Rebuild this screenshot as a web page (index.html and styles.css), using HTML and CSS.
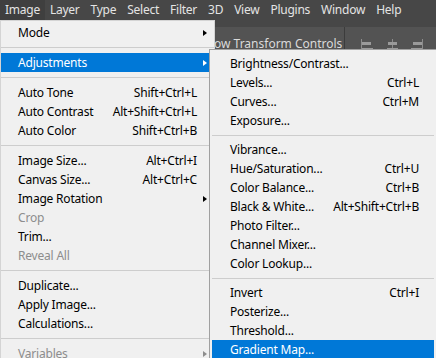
FILE: index.html
```html
<!DOCTYPE html>
<html lang="en">
<head>
    <meta charset="UTF-8">
    <meta name="viewport" content="width=device-width, initial-scale=1.0">
    <title>Image menu</title>
    <link rel="stylesheet" href="styles.css">
</head>
<body>
    <div class="menubar">
        <span class="menubar-item active">Image</span>
        <span class="menubar-item">Layer</span>
        <span class="menubar-item">Type</span>
        <span class="menubar-item">Select</span>
        <span class="menubar-item">Filter</span>
        <span class="menubar-item">3D</span>
        <span class="menubar-item">View</span>
        <span class="menubar-item">Plugins</span>
        <span class="menubar-item">Window</span>
        <span class="menubar-item">Help</span>
    </div>

    <div class="strip"></div>

    <div class="optionsbar">
        <span class="option-label">Show Transform Controls</span>
        <span class="option-divider"></span>
        <div class="align-icons">
            <svg width="14" height="16" viewBox="0 0 14 16">
                <rect x="1" y="0" width="1" height="16" fill="#8c8c8c"/>
                <rect x="2" y="3" width="9" height="3" fill="#9a9a9a"/>
                <rect x="2" y="9" width="11" height="3" fill="#9a9a9a"/>
            </svg>
            <svg width="14" height="16" viewBox="0 0 14 16">
                <rect x="7" y="0" width="1" height="16" fill="#8c8c8c"/>
                <rect x="3" y="3" width="9" height="3" fill="#9a9a9a"/>
                <rect x="2" y="9" width="11" height="3" fill="#9a9a9a"/>
            </svg>
            <svg width="14" height="16" viewBox="0 0 14 16">
                <rect x="12" y="0" width="1" height="16" fill="#8c8c8c"/>
                <rect x="3" y="3" width="9" height="3" fill="#9a9a9a"/>
                <rect x="1" y="9" width="11" height="3" fill="#9a9a9a"/>
            </svg>
        </div>
    </div>

    <!-- Image menu -->
    <div class="menu main-menu">
        <div class="item"><span class="label">Mode</span><span class="key"></span><span class="arrow-slot"><i class="arrow"></i></span></div>
        <div class="sep"></div>
        <div class="item selected"><span class="label">Adjustments</span><span class="key"></span><span class="arrow-slot"><i class="arrow"></i></span></div>
        <div class="sep"></div>
        <div class="item"><span class="label">Auto Tone</span><span class="key">Shift+Ctrl+L</span><span class="arrow-slot"></span></div>
        <div class="item"><span class="label">Auto Contrast</span><span class="key">Alt+Shift+Ctrl+L</span><span class="arrow-slot"></span></div>
        <div class="item"><span class="label">Auto Color</span><span class="key">Shift+Ctrl+B</span><span class="arrow-slot"></span></div>
        <div class="sep"></div>
        <div class="item"><span class="label">Image Size...</span><span class="key">Alt+Ctrl+I</span><span class="arrow-slot"></span></div>
        <div class="item"><span class="label">Canvas Size...</span><span class="key">Alt+Ctrl+C</span><span class="arrow-slot"></span></div>
        <div class="item"><span class="label">Image Rotation</span><span class="key"></span><span class="arrow-slot"><i class="arrow"></i></span></div>
        <div class="item disabled"><span class="label">Crop</span><span class="key"></span><span class="arrow-slot"></span></div>
        <div class="item"><span class="label">Trim...</span><span class="key"></span><span class="arrow-slot"></span></div>
        <div class="item disabled"><span class="label">Reveal All</span><span class="key"></span><span class="arrow-slot"></span></div>
        <div class="sep"></div>
        <div class="item"><span class="label">Duplicate...</span><span class="key"></span><span class="arrow-slot"></span></div>
        <div class="item"><span class="label">Apply Image...</span><span class="key"></span><span class="arrow-slot"></span></div>
        <div class="item"><span class="label">Calculations...</span><span class="key"></span><span class="arrow-slot"></span></div>
        <div class="sep"></div>
        <div class="item disabled"><span class="label">Variables</span><span class="key"></span><span class="arrow-slot"><i class="arrow"></i></span></div>
    </div>

    <!-- Adjustments submenu -->
    <div class="menu sub-menu">
        <div class="item"><span class="label">Brightness/Contrast...</span><span class="key"></span></div>
        <div class="item"><span class="label">Levels...</span><span class="key">Ctrl+L</span></div>
        <div class="item"><span class="label">Curves...</span><span class="key">Ctrl+M</span></div>
        <div class="item"><span class="label">Exposure...</span><span class="key"></span></div>
        <div class="sep"></div>
        <div class="item"><span class="label">Vibrance...</span><span class="key"></span></div>
        <div class="item"><span class="label">Hue/Saturation...</span><span class="key">Ctrl+U</span></div>
        <div class="item"><span class="label">Color Balance...</span><span class="key">Ctrl+B</span></div>
        <div class="item"><span class="label">Black &amp; White...</span><span class="key">Alt+Shift+Ctrl+B</span></div>
        <div class="item"><span class="label">Photo Filter...</span><span class="key"></span></div>
        <div class="item"><span class="label">Channel Mixer...</span><span class="key"></span></div>
        <div class="item"><span class="label">Color Lookup...</span><span class="key"></span></div>
        <div class="sep"></div>
        <div class="item"><span class="label">Invert</span><span class="key">Ctrl+I</span></div>
        <div class="item"><span class="label">Posterize...</span><span class="key"></span></div>
        <div class="item"><span class="label">Threshold...</span><span class="key"></span></div>
        <div class="item selected"><span class="label">Gradient Map...</span><span class="key"></span></div>
    </div>
</body>
</html>
```

FILE: styles.css
```css
body {
    font-family: "Noto Sans", "Segoe UI", sans-serif;
    margin: 0;
    height: 358px;
    overflow: hidden;
    background-color: #535353;
    position: relative;
}
.menubar {
    height: 20px;
    background-color: #474747;
    display: flex;
    font-size: 12px;
    line-height: 20px;
    letter-spacing: -0.25px;
    color: #e4e4e4;
}
.menubar-item {
    padding: 0 6px 0 5px;
}
.menubar-item.active {
    background-color: #3f3f3f;
    padding-right: 5px;
}
.strip {
    height: 7px;
    background-color: #474747;
}
.optionsbar {
    height: 33px;
    display: flex;
    align-items: center;
    padding-left: 200px;
    font-size: 12px;
    color: #dadada;
}
.option-label {
    width: 144px;
}
.option-divider {
    width: 1px;
    height: 33px;
    background-color: #3c3c3c;
}
.align-icons {
    display: flex;
    gap: 11px;
    margin-left: 15px;
    margin-top: 6px;
}

/* menus */
.menu {
    position: absolute;
    background-color: #f0f0f0;
    border: 1px solid #a0a0a0;
    box-sizing: border-box;
    font-size: 12px;
    letter-spacing: -0.2px;
    color: #000;
}
.main-menu {
    top: 20px;
    left: 0;
    width: 215px;
    padding: 2px 0 0 0;
    border-color: #d4d4d4;
}
.sub-menu {
    top: 49px;
    left: 209px;
    width: 228px;
    padding: 4px 2px;
}
.item {
    display: flex;
    height: 19px;
    line-height: 19px;
    white-space: nowrap;
}
.item .label {
    flex: 1;
}
.main-menu .item {
    padding: 0 7px 0 17px;
}
.sub-menu .item {
    padding: 0 15px 0 18px;
}
.arrow-slot {
    width: 10px;
    display: flex;
    align-items: center;
    justify-content: flex-end;
}
.arrow {
    width: 0;
    height: 0;
    border-style: solid;
    border-width: 3.5px 0 3.5px 4px;
    border-color: transparent transparent transparent #000;
}
.item.selected {
    background-color: #0078d7;
    color: #fff;
}
.item.selected .arrow {
    border-left-color: #fff;
}
.item.disabled {
    color: #8d8d8d;
}
.item.disabled .arrow {
    border-left-color: #8d8d8d;
}
.sep {
    height: 11px;
    position: relative;
}
.sep::after {
    content: "";
    position: absolute;
    left: 0;
    right: 0;
    top: 5px;
    height: 1px;
    background-color: #cdcdcd;
}
.sub-menu .sep {
    height: 10px;
}
```
